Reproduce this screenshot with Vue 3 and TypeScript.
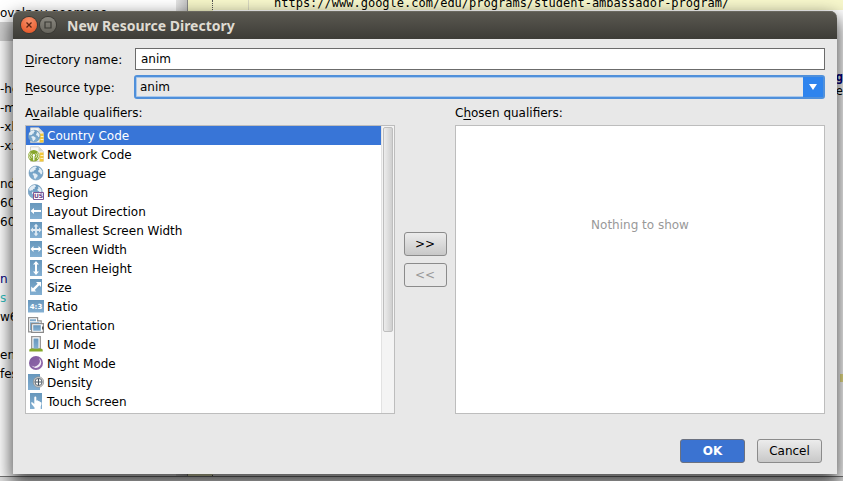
<script setup lang="ts">
import { ref } from 'vue'

interface Qualifier {
  icon: string
  label: string
}

const qualifiers: Qualifier[] = [
  { icon: 'country', label: 'Country Code' },
  { icon: 'network', label: 'Network Code' },
  { icon: 'language', label: 'Language' },
  { icon: 'region', label: 'Region' },
  { icon: 'direction', label: 'Layout Direction' },
  { icon: 'smallest', label: 'Smallest Screen Width' },
  { icon: 'width', label: 'Screen Width' },
  { icon: 'height', label: 'Screen Height' },
  { icon: 'size', label: 'Size' },
  { icon: 'ratio', label: 'Ratio' },
  { icon: 'orientation', label: 'Orientation' },
  { icon: 'uimode', label: 'UI Mode' },
  { icon: 'night', label: 'Night Mode' },
  { icon: 'density', label: 'Density' },
  { icon: 'touch', label: 'Touch Screen' },
]

const treeLines: string[] = [
  'ovalpey geomene', '', '', '', '-he', '-m', '-xh', '-xx', '',
  'nd', '60', '60', '', '', 'n', 's', 'w60', '', 'en', 'fes',
]

const directoryName = ref('anim')
const resourceType = ref('anim')
const selected = ref(0)
</script>

<template>
  <div class="screen">
    <div class="ide" aria-hidden="true">
      <div class="tree">
        <div v-for="(line, i) in treeLines" :key="i" class="tree-line" :class="{ marked: i === 1, navy: i === 14, teal: i === 15 }">{{ line }}</div>
      </div>
      <div class="tree-bar"></div>
      <div class="gutter"></div>
      <div class="editor">
        <div class="url-line">https://www.google.com/edu/programs/student-ambassador-program/</div>
        <div class="code-tail"><b>g</b><span>e</span></div>
        <div class="code-mark"></div>
      </div>
      <div class="status"></div>
    </div>

    <svg class="defs" width="0" height="0" aria-hidden="true">
      <defs>
        <linearGradient id="blue" x1="0" y1="0" x2="0" y2="1">
          <stop offset="0" stop-color="#6797bc" />
          <stop offset="1" stop-color="#83afd2" />
        </linearGradient>
        <linearGradient id="violet" x1="0" y1="0" x2="1" y2="1">
          <stop offset="0" stop-color="#7d5a9c" />
          <stop offset="1" stop-color="#9468ad" />
        </linearGradient>
        <g id="globe">
          <circle cx="8" cy="8" r="7" fill="url(#blue)" stroke="#6a95b7" stroke-width=".6" />
          <path d="M2 4.800C3.400 2.400 5.600 1.200 8 1.400L8.800 2.800 7.400 3.600 7.800 4.800 6 5.400 5.400 6.800 4 6.600 3 7.400 2 6.600ZM5 8.200 7.400 8.400 9.800 10 9.200 12 7.800 13 7.400 14.600 6 12.800 5.800 10.800 4.600 9.600ZM10.400 2.600 12.800 3.800 14.400 6.400 14 9 12.800 9.400 12 7.800 10.400 7 10.200 5.600 11.400 4.600Z" fill="#e3edf5" />
        </g>
        <g id="page">
          <path d="M2.500.8h8.200l4.600 4.600v10H2.500z" fill="#f8f8f6" stroke="#c9c9c5" stroke-width=".8" />
          <path d="M10.500 1v4.500H15z" fill="#d5d5d1" />
          <path d="M11.500 6.500h4v9h-4z" fill="#f2c83c" />
          <path d="M12.500 9.500h3M12.500 12.500h3" stroke="#fff3bf" stroke-width="1" />
        </g>
        <path id="tile" d="M2 0h12v16H2z" fill="url(#blue)" />
      </defs>
      <symbol id="i-country" viewBox="0 0 16 16"><use href="#page" /><use href="#globe" transform="translate(-.6 2.200) scale(.85)" /></symbol>
      <symbol id="i-network" viewBox="0 0 16 16">
        <use href="#page" />
        <circle cx="5.800" cy="9.800" r="5.800" fill="#87a52b" />
        <path d="M3.900 11.800a3 3 0 0 1 0-4.400M7.700 11.800a3 3 0 0 0 0-4.400M2.200 13a5 5 0 0 1 0-6.500M9.400 13a5 5 0 0 0 0-6.500" fill="none" stroke="#edf3d6" stroke-width=".9" />
        <path d="M5.800 9.500v5" stroke="#fff" stroke-width="1.300" /><circle cx="5.800" cy="9.200" r="1.200" fill="#fff" />
      </symbol>
      <symbol id="i-language" viewBox="0 0 16 16"><use href="#globe" /></symbol>
      <symbol id="i-region" viewBox="0 0 16 16">
        <use href="#globe" transform="translate(-.8 -.4)" />
        <path d="M5.500 8.500h10v7h-10z" fill="#fff" stroke="#7d5896" />
        <text x="10.500" y="14.300" text-anchor="middle" font-size="6" font-weight="700" font-family="DejaVu Sans, sans-serif" fill="#6a4388">US</text>
      </symbol>
      <symbol id="i-direction" viewBox="0 0 16 16"><use href="#tile" /><path d="M2.500 8 6 5v2h7v2H6v2z" fill="#fff" /></symbol>
      <symbol id="i-smallest" viewBox="0 0 16 16"><use href="#tile" /><path d="M4 8h8M8 3.500v9" stroke="#e1ebf3" stroke-width="1.800" /><path d="M2.300 8 5 5.500v5zM13.700 8 11 5.500v5zM8 1.700 5.600 4.500h4.800zM8 14.300l-2.400-2.800h4.800z" fill="#e1ebf3" /></symbol>
      <symbol id="i-width" viewBox="0 0 16 16"><use href="#tile" /><path d="M2.500 8 5.500 5v2h5V5l3 3-3 3V9h-5v2z" fill="#fff" /></symbol>
      <symbol id="i-height" viewBox="0 0 16 16"><use href="#tile" /><path d="M8 1l3 3.500H9v7h2L8 15l-3-3.500h2v-7H5z" fill="#fff" /></symbol>
      <symbol id="i-size" viewBox="0 0 16 16"><use href="#tile" /><path d="M13 3v5l-1.700-1.700-4.600 4.600L8.400 12.600H3.200V7.600L5 9.300l4.600-4.600L8 3z" fill="#fff" /></symbol>
      <symbol id="i-ratio" viewBox="0 0 16 16">
        <path d="M0 2h16v12.500H0z" fill="url(#blue)" />
        <text x="8" y="11" text-anchor="middle" font-size="7" font-weight="700" font-family="DejaVu Sans, sans-serif" fill="#fff">4:3</text>
      </symbol>
      <symbol id="i-orientation" viewBox="0 0 16 16">
        <path d="M.6.6h9v3.200h3.600v4H5v7H.6z" fill="#fff" stroke="#929292" stroke-width="1.200" />
        <path d="M2 2.200h6v2H2zM2 5.200h9.500V6H4v7H2z" fill="#7faacc" />
        <path d="M3.600 6.600h11.800v8.800H3.600z" fill="#fff" stroke="#8b8b8b" stroke-width="1.200" />
        <path d="M5.200 8.200h7.600v5.600H5.200z" fill="url(#blue)" /><path d="M14 9.500h1.500v3H14z" fill="#555" />
      </symbol>
      <symbol id="i-uimode" viewBox="0 0 16 16">
        <path d="M3.700.7h8.600V13H3.700z" fill="#fff" stroke="#969696" stroke-width="1.300" />
        <path d="M3 12.500h10l1.700 1v2H1.300v-2z" fill="#86a92a" />
        <path d="M5.500 2.500h5v10h-5z" fill="url(#blue)" />
      </symbol>
      <symbol id="i-night" viewBox="0 0 16 16"><circle cx="8" cy="8" r="7" fill="url(#violet)" /><path d="M10.800 3A5.400 5.400 0 1 1 3.400 10.600 5.400 5.400 0 0 0 10.800 3z" fill="#f1ebf5" /></symbol>
      <symbol id="i-density" viewBox="0 0 16 16"><path d="M0 0h12v16H0z" fill="url(#blue)" /><circle cx="10.500" cy="8" r="5.200" fill="#dcdcdc" stroke="#888" stroke-width=".7" /><circle cx="10.500" cy="8" r="3.600" fill="#fff" stroke="#4f5b66" stroke-width=".9" /><path d="M7 8h7M10.500 4.500v7" stroke="#45525e" stroke-width="1.100" /></symbol>
      <symbol id="i-touch" viewBox="0 0 16 16"><use href="#tile" /><path d="M6.300 4.500a1 1 0 0 1 2 0v3.300l.6-.5 1.100.2.400.6 1.200.1.400.7 1.300.3.200 1.800-.8 2.500V16H6.500v-1.500L3.700 11.300 3 9.600l1.200-.3 2.100 1.600z" fill="#fff" /></symbol>
    </svg>

    <section class="dialog" role="dialog" aria-labelledby="dialog-title">
      <header class="titlebar">
        <button class="orb close" type="button" aria-label="Close">
          <svg viewBox="0 0 16 16"><path d="M5.500 5.500l5 5M10.500 5.500l-5 5" stroke="#5c2412" stroke-width="1.300" /></svg>
        </button>
        <button class="orb" type="button" aria-label="Maximize">
          <svg viewBox="0 0 16 16"><path d="M5 5h6v6H5z" fill="none" stroke="#3b3a35" stroke-width="1.200" /></svg>
        </button>
        <h1 id="dialog-title">New Resource Directory</h1>
      </header>

      <form class="body" @submit.prevent>
        <div class="fields">
          <label for="dir-name"><u>D</u>irectory name:</label>
          <input id="dir-name" v-model="directoryName" type="text" />
          <label for="res-type"><u>R</u>esource type:</label>
          <div class="combo">
            <select id="res-type" v-model="resourceType">
              <option>anim</option>
            </select>
            <span class="combo-arrow"><svg viewBox="0 0 10 8"><path d="M1 1h8L5 7z" fill="#fff" /></svg></span>
          </div>
        </div>

        <div class="picker">
          <div class="column">
            <span id="available" class="caption">A<u>v</u>ailable qualifiers:</span>
            <div class="list-box">
              <ul role="listbox" aria-labelledby="available" tabindex="0">
                <li
                  v-for="(q, i) in qualifiers"
                  :key="q.icon"
                  role="option"
                  :aria-selected="i === selected"
                  :class="{ selected: i === selected }"
                  @click="selected = i"
                >
                  <svg class="icon"><use :href="'#i-' + q.icon" /></svg>
                  <span>{{ q.label }}</span>
                </li>
              </ul>
              <div class="scrollbar"><div class="thumb"></div></div>
            </div>
          </div>

          <div class="movers">
            <button class="btn" type="button">&gt;&gt;</button>
            <button class="btn" type="button" disabled>&lt;&lt;</button>
          </div>

          <div class="column">
            <span class="caption">C<u>h</u>osen qualifiers:</span>
            <div class="chosen">Nothing to show</div>
          </div>
        </div>

        <footer class="actions">
          <button class="btn primary" type="submit">OK</button>
          <button class="btn" type="button">Cancel</button>
        </footer>
      </form>
    </section>
  </div>
</template>

<style>
body {
  margin: 0;
}
</style>

<style scoped>
.screen {
  position: relative;
  box-sizing: border-box;
  min-height: 100vh;
  padding: 11px 6px 7px 13px;
  overflow: hidden;
  font: 12px/21px "DejaVu Sans", "Liberation Sans", sans-serif;
  color: #000;
}
.defs {
  position: absolute;
}

/* Editor window behind the dialog */
.ide {
  position: absolute;
  inset: 0;
  display: grid;
  grid-template-columns: 176px 12px 25px minmax(0, 1fr);
  grid-template-rows: minmax(0, 1fr) 5px;
  background: #fff;
  overflow: hidden;
}
.tree {
  overflow: hidden;
  padding-top: 3px;
}
.tree-line {
  height: 19px;
  white-space: nowrap;
}
.tree-line.marked {
  background: #d0d0d0;
}
.tree-line.navy {
  color: #000080;
}
.tree-line.teal {
  color: #30c0c0;
}
.tree-bar {
  background: linear-gradient(90deg, #e4e4e4, #c4c4c4);
  border-right: 1px solid #888;
}
.gutter {
  background: #f5f5c8;
  border-right: 1px dotted #555;
}
.editor {
  overflow: hidden;
}
.url-line {
  height: 10px;
  margin-left: 35px;
  padding-left: 25px;
  border-left: 1px solid #d8d8c0;
  background: #f7f7cc;
  box-shadow: -35px 0 0 #f7f7cc;
  font: 12px/7px "DejaVu Sans Mono", monospace;
  white-space: nowrap;
}
.code-tail {
  display: flex;
  flex-direction: column;
  align-items: flex-end;
  margin-top: 60px;
  font: 12px/14px "DejaVu Sans Mono", monospace;
}
.code-tail b {
  color: #000080;
}
.code-mark {
  width: 3px;
  height: 8px;
  margin: 276px 0 0 auto;
  background: #f0e68c;
}
.status {
  grid-column: 1 / -1;
  border-top: 1px solid #777;
  background: #e0e0e0;
}

/* Dialog frame */
.dialog {
  position: relative;
  border-radius: 7px 7px 0 0;
  background: #e8e8e8;
  box-shadow: 0 8px 18px 2px rgba(0, 0, 0, 0.7);
}
.titlebar {
  display: flex;
  align-items: center;
  gap: 3px;
  height: 28px;
  padding-left: 8px;
  border-radius: 7px 7px 0 0;
  background: linear-gradient(#5c5a52, #3d3c37);
  box-shadow: inset 0 1px 0 #6a685f;
}
.titlebar h1 {
  margin: 2px 0 0 8px;
  font: 700 14px/20px "Noto Sans", "Open Sans", sans-serif;
  color: #dfdbd2;
}
.orb {
  width: 16px;
  height: 16px;
  padding: 0;
  border: 0;
  border-radius: 50%;
  background: linear-gradient(#8a8880, #67655d);
  box-shadow: 0 0 0 1px #3a3934;
}
.orb.close {
  background: radial-gradient(circle at 50% 25%, #f7906a, #e4501f);
}
.orb svg {
  display: block;
}

.body {
  padding: 9px 12px 11px;
}
.fields {
  display: grid;
  grid-template-columns: 110px minmax(0, 1fr);
  row-gap: 5px;
  align-items: center;
}
label {
  padding-top: 2px;
  line-height: 20px;
}
u {
  text-decoration: underline;
  text-underline-offset: 2px;
}
input,
select {
  box-sizing: border-box;
  width: 100%;
  margin: 0;
  font: inherit;
  color: inherit;
  outline: 0;
}
input {
  height: 22px;
  padding: 0 5px;
  border: 1px solid #6b6b6b;
  background: #fff;
}
.combo {
  display: flex;
  height: 24px;
  margin-left: -1px;
  box-sizing: border-box;
  border: 2px solid #5090da;
  border-radius: 3px;
  background: #e8e8e8;
  box-shadow: inset 0 0 0 1px #a9c8ec;
}
.combo select {
  appearance: none;
  flex: 1;
  padding: 0 4px;
  border: 0;
  background: transparent;
}
.combo-arrow {
  display: grid;
  place-items: center;
  width: 20px;
  background: #2e84ee;
}
.combo-arrow svg {
  width: 10px;
  height: 8px;
}

/* Qualifier lists */
.picker {
  display: grid;
  grid-template-columns: minmax(0, 1fr) 60px minmax(0, 1fr);
}
.column {
  display: flex;
  flex-direction: column;
}
.caption {
  padding: 4px 0 1px;
}
.list-box,
.chosen {
  flex: 1;
  border: 1px solid #bdbdbd;
  background: #fff;
}
.list-box {
  display: flex;
}
ul {
  flex: 1;
  margin: 0;
  padding: 0 0 2px;
  list-style: none;
  outline: 0;
}
li {
  display: flex;
  gap: 3px;
  height: 19px;
  padding-left: 2px;
}
li.selected {
  background: #3875d7;
  color: #fff;
}
.icon {
  width: 16px;
  height: 16px;
  margin-top: 1px;
}
.scrollbar {
  width: 10px;
  padding: 1px;
  border-left: 1px solid #e2e2e2;
  background: #f4f4f4;
}
.thumb {
  box-sizing: border-box;
  height: 72%;
  border: 1px solid #bebebe;
  border-radius: 2px;
  background: linear-gradient(90deg, #ececec, #cfcfcf);
}
.chosen {
  padding-top: 89px;
  text-align: center;
  color: #999;
}
.movers {
  display: flex;
  flex-direction: column;
  align-items: center;
  justify-content: center;
  gap: 7px;
  padding-top: 6px;
}
.btn {
  box-sizing: border-box;
  width: 65px;
  height: 24px;
  padding: 0;
  border: 1px solid #8b8b8b;
  border-radius: 3px;
  background: linear-gradient(#ececec, #c8c8c8);
  font: inherit;
  color: #000;
}
.movers .btn {
  width: 43px;
}
.btn:disabled {
  background: #e8e8e8;
  color: #999;
}
.btn.primary {
  border-color: #6b7180;
  background: #3b73d1;
  font-weight: 700;
  color: #fff;
}
.actions {
  display: flex;
  justify-content: flex-end;
  gap: 12px;
  padding: 25px 3px 0;
}
</style>
